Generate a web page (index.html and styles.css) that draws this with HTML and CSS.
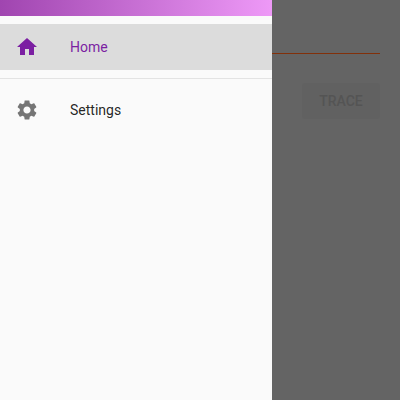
FILE: index.html
```html
<!DOCTYPE html>
<html lang="en">
<head>
<meta charset="utf-8">
<title>Home</title>
<link rel="stylesheet" href="styles.css">
</head>
<body>
<div class="screen">
  <main class="content">
    <div class="line"></div>
    <button class="trace">TRACE</button>
  </main>
  <div class="scrim"></div>
  <nav class="drawer">
    <div class="header"></div>
    <a class="item active">
      <svg class="icon" viewBox="0 0 24 24"><path d="M10 20v-6h4v6h5v-8h3L12 3 2 12h3v8z"/></svg>
      <span>Home</span>
    </a>
    <div class="divider"></div>
    <a class="item settings">
      <svg class="icon" viewBox="0 0 24 24"><path d="M19.14 12.94c.04-.3.06-.61.06-.94 0-.32-.02-.64-.07-.94l2.03-1.58c.18-.14.23-.41.12-.61l-1.92-3.32c-.12-.22-.37-.29-.59-.22l-2.39.96c-.5-.38-1.03-.7-1.62-.94l-.36-2.54c-.04-.24-.24-.41-.48-.41h-3.84c-.24 0-.43.17-.47.41l-.36 2.54c-.59.24-1.13.57-1.62.94l-2.39-.96c-.22-.08-.47 0-.59.22L2.74 8.87c-.12.21-.08.47.12.61l2.03 1.58c-.05.3-.09.63-.09.94s.02.64.07.94l-2.03 1.58c-.18.14-.23.41-.12.61l1.92 3.32c.12.22.37.29.59.22l2.39-.96c.5.38 1.03.7 1.62.94l.36 2.54c.05.24.24.41.48.41h3.84c.24 0 .44-.17.47-.41l.36-2.54c.59-.24 1.13-.56 1.62-.94l2.39.96c.22.08.47 0 .59-.22l1.92-3.32c.12-.22.07-.47-.12-.61l-2.01-1.58zM12 15.6c-1.98 0-3.6-1.62-3.6-3.6s1.62-3.6 3.6-3.6 3.6 1.62 3.6 3.6-1.62 3.6-3.6 3.6z"/></svg>
      <span>Settings</span>
    </a>
  </nav>
</div>
</body>
</html>
```
FILE: styles.css
```css
* { box-sizing: border-box; }
html, body { margin: 0; padding: 0; }
body { font-family: Roboto, "Liberation Sans", sans-serif; }
.screen { position: relative; width: 400px; height: 400px; overflow: hidden; background: #fafafa; }
.content { display: flex; flex-direction: column; align-items: flex-end; padding: 53px 20px 0 0; height: 100%; }
.line { position: relative; z-index: 1; width: 300px; height: 1px; background: #82300a; }
.trace {
  margin-top: 29px; width: 78px; height: 36px; border: 0; border-radius: 2px;
  background: #f2f2f2; color: #d2d2d2; font: 500 14px Roboto, sans-serif; padding: 0;
}
.scrim { position: absolute; inset: 0; background: rgba(0,0,0,.6); }
.drawer { position: absolute; z-index: 2; left: 0; top: 0; bottom: 0; width: 272px; background: #fafafa; display: flex; flex-direction: column; }
.header { height: 16px; background: linear-gradient(90deg, #a045b0, #ee99f7); flex: none; }
.item { display: flex; align-items: center; height: 46px; padding-left: 15px; font-size: 14px; font-weight: 400; color: #000000de; flex: none; }
.item span { margin-left: 31px; }
.icon { width: 24px; height: 24px; fill: #757575; flex: none; }
.active { margin-top: 8px; background: #dcdcdc; color: #7b1fa2; }
.active .icon { fill: #7b1fa2; }
.divider { height: 1px; margin-top: 8px; background: #e3e3e3; flex: none; }
.settings { margin-top: 8px; }
```
